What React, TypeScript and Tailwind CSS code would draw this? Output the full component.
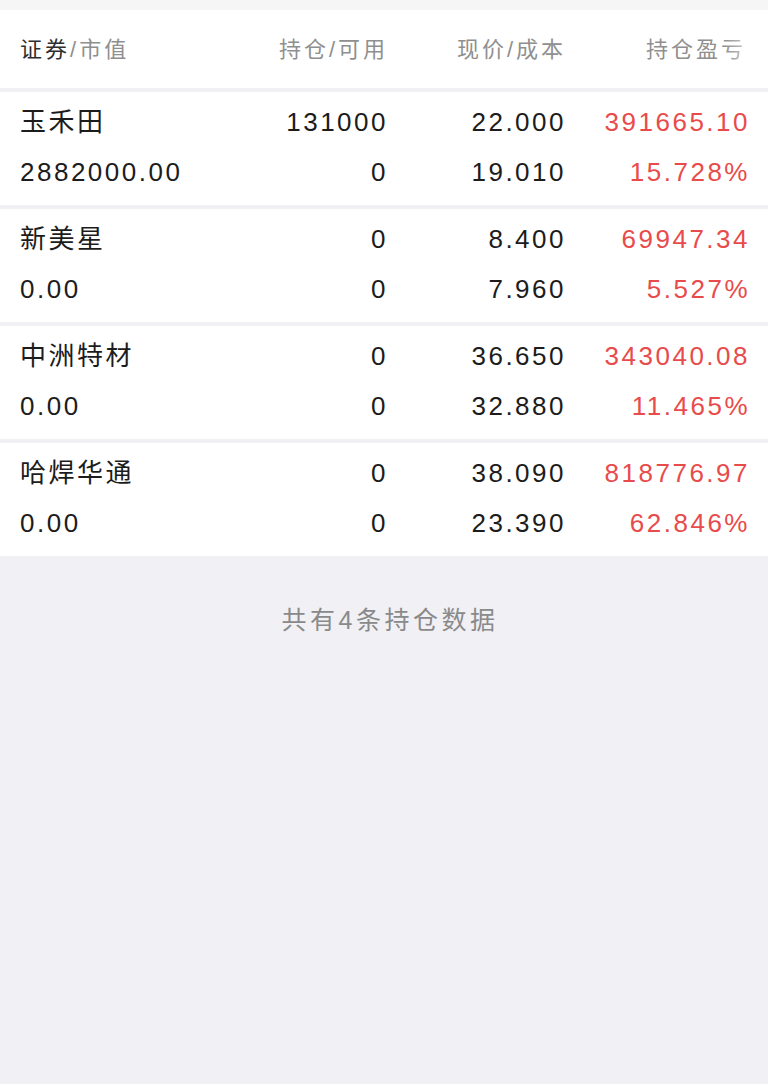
const rows = [
  { name: "玉禾田", value: "2882000.00", hold: "131000", avail: "0", price: "22.000", cost: "19.010", pnl: "391665.10", pct: "15.728%" },
  { name: "新美星", value: "0.00", hold: "0", avail: "0", price: "8.400", cost: "7.960", pnl: "69947.34", pct: "5.527%" },
  { name: "中洲特材", value: "0.00", hold: "0", avail: "0", price: "36.650", cost: "32.880", pnl: "343040.08", pct: "11.465%" },
  { name: "哈焊华通", value: "0.00", hold: "0", avail: "0", price: "38.090", cost: "23.390", pnl: "818776.97", pct: "62.846%" },
]

const font = { fontFamily: '"Liberation Sans", "Noto Sans CJK SC", sans-serif' }

function PositionRow({ r }: { r: (typeof rows)[number] }) {
  return (
    <div className="h-[113px] bg-white pl-5 pr-[18px] pt-[5px]">
      <div className="grid grid-cols-[180px_188px_178px_184px] text-[26px] tracking-[2.5px] leading-[50px]">
        <div className="text-[#1c1c1c]">{r.name}</div>
        <div className="text-right text-[#1c1c1c]">{r.hold}</div>
        <div className="text-right text-[#1c1c1c]">{r.price}</div>
        <div className="text-right text-[#e84b4b]">{r.pnl}</div>
        <div className="text-[#1c1c1c]">{r.value}</div>
        <div className="text-right text-[#1c1c1c]">{r.avail}</div>
        <div className="text-right text-[#1c1c1c]">{r.cost}</div>
        <div className="text-right text-[#e84b4b]">{r.pct}</div>
      </div>
    </div>
  )
}

export default function App() {
  return (
    <div className="w-[768px] h-[1084px] bg-[#f0f0f5] overflow-hidden" style={font}>
      <div className="h-[10px] bg-[#f6f6f6]" />
      <div className="relative h-[78px] bg-white pl-5 pr-[18px] flex items-center">
        <div className="grid w-full grid-cols-[180px_188px_178px_184px] text-[22px] tracking-[3px] text-[#8f8f8f]">
          <div>
            <span className="text-[#2e2e2e]">证券</span>/市值
          </div>
          <div className="text-right">持仓/可用</div>
          <div className="text-right">现价/成本</div>
          <div className="text-right pr-[4px]">持仓盈亏</div>
        </div>
        <div className="absolute right-0 top-0 h-full w-[44px] bg-gradient-to-r from-white/0 to-white" />
      </div>
      <div className="flex flex-col gap-[4px] pt-[4px]">
        {rows.map((r) => (
          <PositionRow key={r.name} r={r} />
        ))}
      </div>
      <div className="pt-[44px] pl-[12px] text-center text-[25px] tracking-[3.5px] text-[#8a8a8a] leading-[40px]">
        共有4条持仓数据
      </div>
    </div>
  )
}
